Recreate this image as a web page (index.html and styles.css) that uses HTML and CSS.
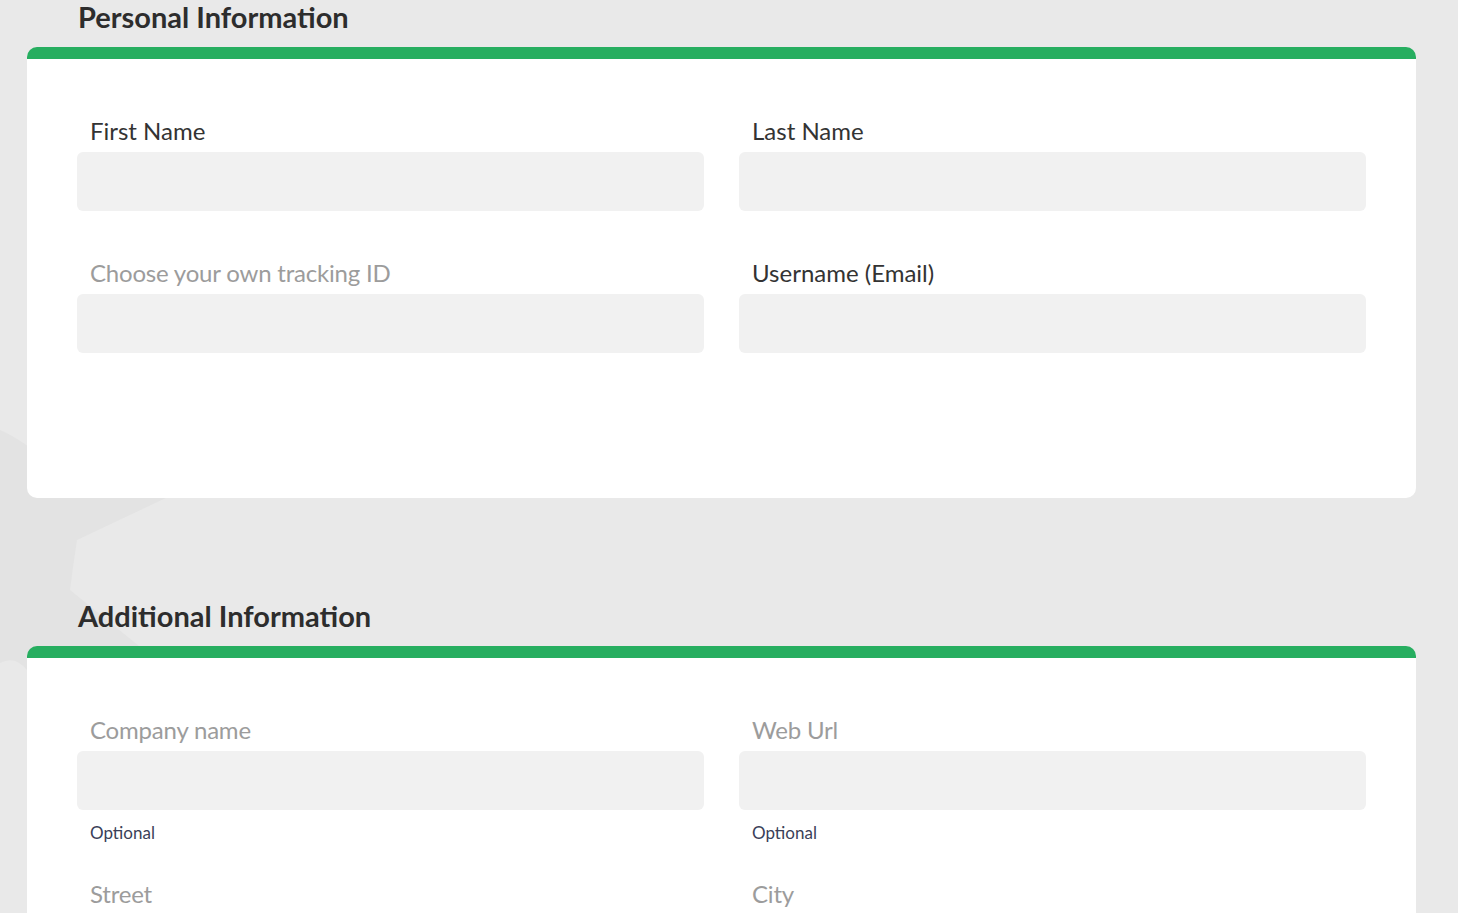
FILE: index.html
```html
<!DOCTYPE html>
<html lang="en">
<head>
<meta charset="utf-8">
<title>Personal Information</title>
<link rel="stylesheet" href="styles.css">
</head>
<body>
<svg class="bg-star" width="200" height="700" viewBox="0 0 200 700" aria-hidden="true">
  <path d="M0,430 Q15,436 40,455 L168,497 L77,540 Q73,566 70,590 L150,655 L40,690 L27,670 Q15,655 0,663 Z" fill="#e3e3e3"/>
</svg>
<main class="page">
  <section class="section">
    <h2 class="section-title first">Personal Information</h2>
    <div class="card card-tall">
      <div class="grid">
        <div class="field">
          <label class="label">First Name</label>
          <div class="input"></div>
        </div>
        <div class="field">
          <label class="label">Last Name</label>
          <div class="input"></div>
        </div>
        <div class="field">
          <label class="label muted">Choose your own tracking ID</label>
          <div class="input"></div>
        </div>
        <div class="field">
          <label class="label">Username (Email)</label>
          <div class="input"></div>
        </div>
      </div>
    </div>
  </section>

  <section class="section">
    <h2 class="section-title">Additional Information</h2>
    <div class="card">
      <div class="grid grid-help">
        <div class="field">
          <label class="label muted">Company name</label>
          <div class="input"></div>
          <div class="help">Optional</div>
        </div>
        <div class="field">
          <label class="label muted">Web Url</label>
          <div class="input"></div>
          <div class="help">Optional</div>
        </div>
        <div class="field">
          <label class="label muted">Street</label>
          <div class="input"></div>
        </div>
        <div class="field">
          <label class="label muted">City</label>
          <div class="input"></div>
        </div>
      </div>
    </div>
  </section>
</main>
</body>
</html>
```

FILE: styles.css
```css
* { box-sizing: border-box; }

html, body {
  margin: 0;
  padding: 0;
}

body {
  background: #e9e9e9;
  font-family: Lato, "Open Sans", "Liberation Sans", sans-serif;
  color: #333333;
  position: relative;
  overflow: hidden;
}

.bg-star {
  position: absolute;
  top: 0;
  left: 0;
  z-index: 0;
}

.page {
  position: relative;
  z-index: 1;
  padding: 0 42px 40px 27px;
}

.section-title {
  margin: 100px 0 12px 0;
  padding-left: 51px;
  font-size: 29px;
  line-height: 36px;
  font-weight: 700;
  color: #2d2d2d;
}

.section-title.first {
  margin-top: -1px;
}

.card {
  background: #ffffff;
  border-top: 12px solid #27ae60;
  border-radius: 10px;
  padding: 57px 50px 60px 50px;
}

.card-tall {
  padding-bottom: 145px;
}

.grid {
  display: grid;
  grid-template-columns: 1fr 1fr;
  column-gap: 35px;
  row-gap: 47px;
}

.grid-help {
  row-gap: 35px;
}

.field {
  display: flex;
  flex-direction: column;
}

.label {
  display: block;
  padding-left: 13px;
  font-size: 24px;
  line-height: 30px;
  font-weight: 400;
  color: #333333;
  margin-bottom: 6px;
}

.label.muted {
  color: #9c9c9c;
  letter-spacing: -0.2px;
}

.input {
  height: 59px;
  background: #f1f1f1;
  border-radius: 6px;
}

.help {
  margin-top: 12px;
  padding-left: 13px;
  font-size: 17px;
  line-height: 22px;
  font-weight: 400;
  color: #3a3f58;
}
```
